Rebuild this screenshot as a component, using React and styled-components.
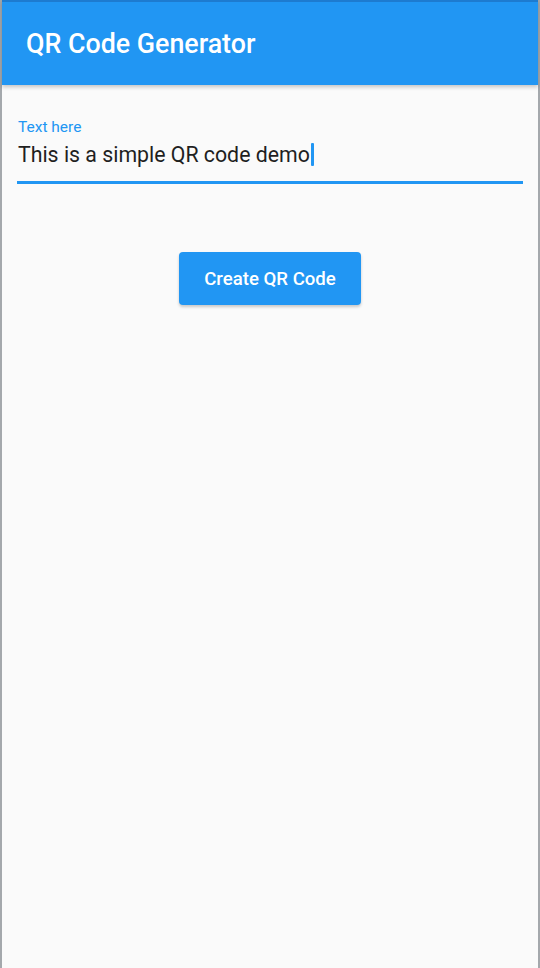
import React from 'react';
import styled, { createGlobalStyle } from 'styled-components';

const GlobalStyle = createGlobalStyle`
  html, body {
    margin: 0;
    padding: 0;
    background: #fafafa;
  }
  * {
    box-sizing: border-box;
  }
`;

const Frame = styled.div`
  display: flex;
  flex-direction: column;
  min-height: 968px;
  background: #fafafa;
  border-left: 2px solid #a4a8ac;
  border-right: 2px solid #a4a8ac;
  font-family: Roboto, "Liberation Sans", sans-serif;
`;

const AppBar = styled.header`
  position: relative;
  z-index: 1;
  display: flex;
  align-items: center;
  height: 85px;
  padding: 0 24px;
  background: #2196f3;
  border-top: 2px solid #1d7bd0;
  box-shadow: 0 2px 4px rgba(0, 0, 0, 0.22);
`;

const Title = styled.h1`
  margin: 0;
  font-size: 26.8px;
  font-weight: 500;
  color: #fff;
`;

const Body = styled.main`
  display: flex;
  flex-direction: column;
  padding: 33px 15px 0;
`;

const Field = styled.label`
  display: flex;
  flex-direction: column;
  padding: 0 1px 8px;
  border-bottom: 3px solid #2196f3;
`;

const Label = styled.span`
  font-size: 15.5px;
  line-height: 18px;
  color: #2196f3;
`;

const InputRow = styled.div`
  display: flex;
  align-items: center;
  height: 37px;
  font-size: 21.3px;
  color: #1f1f1f;
`;

const Caret = styled.span`
  display: inline-block;
  width: 3px;
  height: 23px;
  margin-left: 1px;
  border-radius: 1px;
  background: #2196f3;
`;

const Actions = styled.div`
  display: flex;
  justify-content: center;
  padding-top: 68px;
`;

const Button = styled.button`
  width: 182px;
  height: 53px;
  border: none;
  border-radius: 4px;
  background: #2196f3;
  color: #fff;
  font-family: inherit;
  font-size: 18.6px;
  font-weight: 500;
  box-shadow: 0 2px 3px rgba(0, 0, 0, 0.2);
  cursor: pointer;
`;

export default function App() {
  return (
    <>
      <GlobalStyle />
      <Frame>
        <AppBar>
          <Title>QR Code Generator</Title>
        </AppBar>
        <Body>
          <Field>
            <Label>Text here</Label>
            <InputRow>
              This is a simple QR code demo
              <Caret />
            </InputRow>
          </Field>
          <Actions>
            <Button>Create QR Code</Button>
          </Actions>
        </Body>
      </Frame>
    </>
  );
}
